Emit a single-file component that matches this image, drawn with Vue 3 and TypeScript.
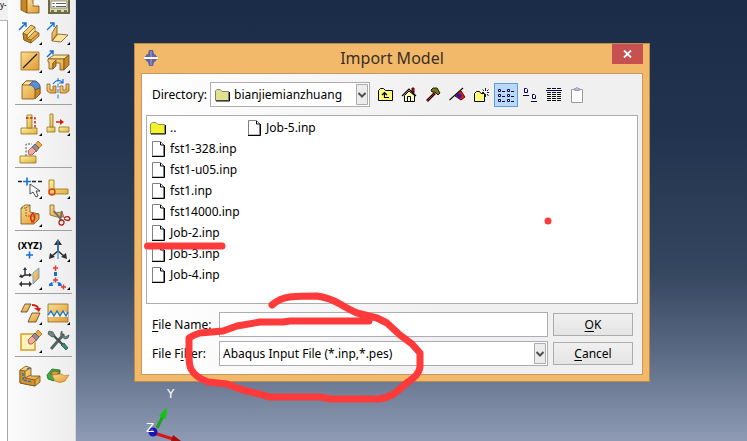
<script setup lang="ts">
import { ref } from 'vue'

interface Shape {
  d: string
  f?: string
  s?: string
  w?: number
  dash?: string
}

interface Tool {
  label: string
  shapes: Shape[]
  menu?: boolean
  text?: string
}

const gold = 'url(#gold)'
const pale = '#fbe39a'
const dark = '#74541a'
const deep = '#c98624'
const straw = 'url(#straw)'
const blue = '#1670d8'
const red = '#d3200e'
const ink = '#303030'

const eraser: Shape[] = [
  { d: 'M19 7L22 3L26 7L22 11z', f: '#eda94a', s: '#a8691d' },
  { d: 'M16 9L19 6L23 10L20 14z', f: '#8e8e96', s: '#4f4f58' },
  { d: 'M12 13L16 9L20 13L16 17H13z', f: '#f2a9a0', s: '#a04f48' },
]

const groups: Tool[][] = [
  [
    {
      label: 'Create solid',
      shapes: [
        { d: 'M5 4V19L11 22V7z', f: deep, s: dark },
        { d: 'M11 4V22H23V15H17V4z', f: gold, s: dark },
        { d: 'M17 14L13 11V4', s: pale },
      ],
    },
    {
      label: 'Part manager',
      shapes: [
        { d: 'M5 5H25V22H5z', f: '#d9d6b4', s: '#6b6946', w: 2 },
        { d: 'M7 10H23V17H7z', f: '#fff', s: '#7d7b58' },
        { d: 'M8.500 12.500H10.500M12 12.500H22M8.500 15.500H10.500M12 15.500H22', s: '#333' },
        { d: 'M7 20H10M13 20H17M20 20H23', s: '#77754f', w: 2 },
      ],
    },
    {
      label: 'Extrude solid',
      menu: true,
      shapes: [
        { d: 'M3 11L10 4M6 4H10V8', s: blue, w: 1.5 },
        { d: 'M7 14L15 6L19 8V12L23 14V17L15 24L8 21z', f: gold, s: dark },
        { d: 'M7 14L11 16V20L15 21V24L8 21z', f: deep, s: dark },
        { d: 'M11 16L19 8M11 20L19 12M15 21L23 14', s: dark },
        { d: 'M12 15.500L18.500 9V12L12 18.500z', f: pale },
      ],
    },
    {
      label: 'Extrude shell',
      menu: true,
      shapes: [
        { d: 'M3 11L10 4M6 4H10V8', s: blue, w: 1.3 },
        { d: 'M8 22V14L13 6V15z', f: gold, s: dark },
        { d: 'M8 22L14 15L24 16L17 23z', f: pale, s: dark },
      ],
    },
    {
      label: 'Partition face',
      menu: true,
      shapes: [
        { d: 'M5 5H23V23H5z', f: gold, s: '#9b6f25' },
        { d: 'M7 21L21 7', s: '#2b2416', w: 1.3 },
      ],
    },
    {
      label: 'Extrude cut',
      menu: true,
      shapes: [
        { d: 'M3 10L9 4M5.500 4H9V7.500', s: blue, w: 1.5 },
        { d: 'M4 12L10 8H25L20 12z', f: pale, s: dark },
        { d: 'M4 12H20V23H16V16H9V22H5V15H4z', f: gold, s: dark },
        { d: 'M20 12L25 8V18L20 23zM9 16L12 13V19L9 22z', f: deep, s: dark },
      ],
    },
    {
      label: 'Round edge',
      menu: true,
      shapes: [
        { d: 'M6 10L10 6H20L24 11V19L18 24H6z', f: gold, s: dark },
        { d: 'M6 10L10 6H17L13 10z', f: pale, s: dark },
        { d: 'M13 10L17 6Q24 6 24 13L19 15Q18 10 13 10z', f: '#5c8ed6', s: '#31589a' },
        { d: 'M19 15V24L24 19V13z', f: deep, s: dark },
      ],
    },
    {
      label: 'Mirror part',
      shapes: [
        { d: 'M3 9H6V15H9V11H12V18H6L3 16z', f: gold, s: '#8f611b' },
        { d: 'M25 9H22V15H19V11H16V18H22L25 16z', f: gold, s: '#8f611b' },
        { d: 'M14 3V25', s: '#4b9be6', w: 1.3, dash: '4 1.500' },
        { d: 'M9 9Q14 2 19 8M19 4V8H15', s: blue, w: 1.2 },
      ],
    },
  ],
  [
    {
      label: 'Edit feature',
      menu: true,
      shapes: [
        { d: 'M5 18H21V24H5z', f: straw, s: '#8f7420' },
        { d: 'M11 5H16V18H11z', f: straw, s: '#8f7420' },
        { d: 'M10 8H19V18', s: red, w: 1.5, dash: '2.500 1.500' },
      ],
    },
    {
      label: 'Move feature',
      menu: true,
      shapes: [
        { d: 'M3 17H11V22H3z', f: straw, s: '#8f7420' },
        { d: 'M6 4H9V17H6z', f: straw, s: '#8f7420' },
        { d: 'M12 12H18', s: red, w: 1.5 },
        { d: 'M16 9L20 12L16 15z', f: red },
        { d: 'M15 17H25V22H15z', f: straw, s: '#8f7420' },
      ],
    },
    {
      label: 'Delete feature',
      shapes: [
        { d: 'M10 18V6H16', s: '#222', dash: '2 1.500' },
        { d: 'M4 18H20V25H4z', f: straw, s: '#8f7420' },
        ...eraser,
      ],
    },
  ],
  [
    {
      label: 'Datum point',
      menu: true,
      shapes: [
        { d: 'M2 8.500H6M16 8.500H20M22 8.500H26', s: '#222', w: 1.3 },
        { d: 'M7 8.500H15M11 4.500V12.500', s: blue, w: 1.6 },
        { d: 'M14 11V21L17 19L20 24L22 23L20 18H24z', f: '#fff', s: '#222' },
      ],
    },
    {
      label: 'Datum edge',
      menu: true,
      shapes: [
        { d: 'M5 7H10V16H24V21H5z', f: straw, s: '#96701d' },
        { d: 'M8 16A3 3 0 1 1 8 22A3 3 0 1 1 8 16', s: '#e23a17', w: 1.4 },
      ],
    },
    {
      label: 'Partition cell',
      menu: true,
      shapes: [
        { d: 'M5 7L9 4H14V11L23 13V18L18 23H5z', f: gold, s: dark },
        { d: 'M5 7H10V15H18V22M10 7L14 4M18 15L23 12', s: dark, dash: '2 1' },
        { d: 'M17 12Q13 15 16 21Q21 18 17 12', s: '#e02717', w: 1.5 },
      ],
    },
    {
      label: 'Trim edges',
      shapes: [
        { d: 'M6 4H10V12L18 11L20 16H13L6 14z', f: gold, s: '#83632a' },
        { d: 'M10 10L18 20M18 10L16 20', s: '#6b6b72', w: 1.7 },
        { d: 'M17 19A2.500 2.500 0 1 0 18 24A2.500 2.500 0 1 0 17 19M20 17Q25 14 26 18Q25 21 20 18', s: '#b41917', w: 1.3 },
      ],
    },
  ],
  [
    {
      label: 'Point from coordinates',
      menu: true,
      text: '(XYZ)',
      shapes: [{ d: 'M10 19H17M13.500 15.500V22.500', s: blue, w: 1.6 }],
    },
    {
      label: 'Coordinate system',
      menu: true,
      shapes: [
        { d: 'M14 6V15L8 20M14 15L20 20', s: ink, w: 1.6 },
        { d: 'M10 9L14 3L18 9zM5 23L6 17L11 21zM23 23L22 17L17 21z', f: ink },
        { d: 'M14 4V23', s: '#2e8ae0', w: 1.2 },
      ],
    },
    {
      label: 'Datum plane',
      menu: true,
      shapes: [
        { d: 'M9 5V11L5 13M9 11H14M4 20H15', s: ink, w: 1.4 },
        { d: 'M7 6L9 3L11 6zM13 9L16 11L13 13zM3 13L5 10L7 14zM6 17L3 20L6 23zM13 17L16 20L13 23z', f: ink },
        { d: 'M17 9L23 4V14L17 20z', f: gold, s: '#4c93d2' },
      ],
    },
    {
      label: 'Datum axis system',
      menu: true,
      shapes: [
        { d: 'M9 4H14M11.500 1.500V7M9 16H14M11.500 13.500V18.500M17 23H22M19.500 20.500V25.500', s: '#e33b2c', w: 1.5 },
        { d: 'M10 8H13V12H10zM5 20L8 18L9 22H5zM14 18L17 19L18 22H14z', f: blue },
        { d: 'M6 21L11 17L17 21', s: blue, dash: '2 1' },
      ],
    },
  ],
  [
    {
      label: 'Copy mesh',
      menu: true,
      shapes: [
        { d: 'M5 13L9 5H15L11 13z', f: gold, s: '#54401c' },
        { d: 'M12 23L16 14H24L20 23z', f: gold, s: '#54401c' },
        { d: 'M16 6Q21 6 22 9', s: red, w: 2 },
        { d: 'M18 9H25L23 13z', f: red },
      ],
    },
    {
      label: 'Virtual topology',
      menu: true,
      shapes: [
        { d: 'M4 5H24V23H4z', f: gold, s: '#8f6a25' },
        { d: 'M4 14L7 12L10 17L13 12L16 17L20 12L24 15V18H4z', f: '#f6f5ec' },
        { d: 'M4 16L7 12L10 17L13 12L16 17L19 12L22 17L24 13', s: '#1877cc', w: 1.4 },
      ],
    },
    {
      label: 'Clear',
      menu: true,
      shapes: [{ d: 'M5 7H19V23H5z', f: '#fff2bb', s: '#d79d27', w: 1.5 }, ...eraser],
    },
    {
      label: 'Repair tools',
      shapes: [
        { d: 'M7 22L20 7', s: '#516765', w: 3 },
        { d: 'M9 8L22 21', s: '#444d4d', w: 2.4 },
        { d: 'M5 4L9 5L11 9L8 10L4 7zM18 4V8L21 10L25 8Q25 12 21 12L17 9Q16 5 18 4z', f: '#758581', s: '#4c5856' },
        { d: 'M17 18L20 16L24 21L22 23z', f: '#2f8d7a', s: '#34504a' },
      ],
    },
  ],
  [
    {
      label: 'Merge parts',
      shapes: [
        { d: 'M4 8L10 4L15 6V14L24 14V20L19 24L4 21z', f: gold, s: dark },
        { d: 'M4 8L9 9V16L19 18V24L4 21z', f: '#d99028', s: dark },
        { d: 'M9 9L15 6M9 16L15 13M19 18L24 14', s: dark },
        { d: 'M7 11V18L16 20M11 7L13 6', s: blue, w: 1.3, dash: '3 1' },
      ],
    },
    {
      label: 'Render options',
      shapes: [
        { d: 'M3 13L8 7L16 8V12L11 13L10 19L4 17z', f: '#47a844', s: '#1d6c27' },
        { d: 'M6 12L10 9L16 10L12 13z', f: '#d3a248', s: '#735a1e' },
        { d: 'M8 13L17 12Q20 15 25 13L21 19Q16 22 11 19z', f: gold, s: '#c38733' },
      ],
    },
  ],
]

interface FileTool {
  label: string
  shapes: Shape[]
  active?: boolean
}

const folderYellow = '#ffff78'
const navy = '#000080'

const fileTools: FileTool[] = [
  {
    label: 'Up one level',
    shapes: [
      { d: 'M1.500 13.500V3.500L3.500 1.500H6.500L8.500 3.500H15.500V13.500z', f: folderYellow, s: '#000' },
      { d: 'M12 10.500H7.500V6M5 8L7.500 5.500L10 8', s: '#000', w: 1.2 },
    ],
  },
  {
    label: 'Home',
    shapes: [
      { d: 'M11 1H13V6H11z', f: '#a31515', s: '#600' },
      { d: 'M3.500 8.500L8 4L13.500 8.500V14.500H3.500z', f: '#ffffb0', s: '#000' },
      { d: 'M1 9L8 2L15 9', s: '#000', w: 1.2 },
      { d: 'M6.500 14V9.500H9.500V14', f: '#fff', s: '#000' },
    ],
  },
  {
    label: 'Work directory',
    shapes: [
      { d: 'M2 14L10 6', s: '#300', w: 2.6 },
      { d: 'M2 14L10 6', s: '#a51c1c', w: 1 },
      { d: 'M6 3L8 1H12L15 6L13 8L10 5L7 5z', f: '#76761b', s: '#222200' },
    ],
  },
  {
    label: 'Bookmark',
    shapes: [
      { d: 'M.5 13L14 1', s: '#111', w: 1.2 },
      { d: 'M9 6L12 4L16 10L12 13L6 9z', f: '#e01818', s: '#700' },
      { d: 'M9 6L13 8L11 12L7 9z', f: '#1b20b0' },
    ],
  },
  {
    label: 'New directory',
    shapes: [
      { d: 'M1.500 14.500V6.500L3.500 4.500H6.500L8 6.500H11.500V14.500z', f: folderYellow, s: '#000' },
      { d: 'M12.500 1V4M12.500 7V10M9 5.500H11M14 5.500H16M9.500 2.500L11 4M14 7L15.500 9M15.500 2.500L14 4', s: '#222' },
    ],
  },
  {
    label: 'List view',
    active: true,
    shapes: [
      { d: 'M1.500 2.500H3.500V4.500H1.500zM10.500 2.500H12.500V4.500H10.500zM1.500 7.500H3.500V9.500H1.500zM10.500 7.500H12.500V9.500H10.500zM1.500 12.500H3.500V14.500H1.500zM10.500 12.500H12.500V14.500H10.500z', f: '#fff', s: navy },
      { d: 'M5 4.500H8M14 4.500H17M5 9.500H8M14 9.500H17M5 14.500H8M14 14.500H17', s: '#111' },
    ],
  },
  {
    label: 'Icon view',
    shapes: [
      { d: 'M3.500 1.500H5.500L6.500 2.500V5.500H3.500zM11.500 7.500H13.500L14.500 8.500V11.500H11.500z', f: '#fff', s: navy },
      { d: 'M2 8.500H8M10 14.500H16', s: '#111' },
    ],
  },
  {
    label: 'Detail view',
    shapes: [
      { d: 'M1 3.500H17', s: navy },
      { d: 'M2 1.500H16M2 5.500H16M2 7.500H16M2 9.500H16M2 11.500H16M2 13.500H16', s: '#111', dash: '4 1' },
    ],
  },
  {
    label: 'Show files',
    shapes: [
      { d: 'M2.500 2.500H13.500V15.500H2.500z', f: '#fff', s: '#9a9a9a' },
      { d: 'M5.500 3.500V1.500H7L7.500 .5H8.500L9 1.500H10.500V3.500z', f: '#b9b9e4', s: '#9a9ac4' },
    ],
  },
]

const files: string[] = [
  '..',
  'fst1-328.inp',
  'fst1-u05.inp',
  'fst1.inp',
  'fst14000.inp',
  'Job-2.inp',
  'Job-3.inp',
  'Job-4.inp',
  'Job-5.inp',
]

const fileName = ref('')
const directory = ref('bianjiemianzhuang')
const filter = ref('Abaqus Input File (*.inp,*.pes)')
</script>

<template>
  <div class="app">
    <svg class="defs" aria-hidden="true">
      <defs>
        <linearGradient id="gold" x1="0" y1="0" x2="1" y2="1">
          <stop offset="0" stop-color="#fbdc8c" />
          <stop offset="1" stop-color="#e09a34" />
        </linearGradient>
        <linearGradient id="straw" x1="0" y1="0" x2="1" y2="1">
          <stop offset="0" stop-color="#fff2a0" />
          <stop offset="1" stop-color="#dfb040" />
        </linearGradient>
      </defs>
    </svg>

    <aside class="tree">
      <div class="tree-head">y-</div>
      <div class="tree-body"></div>
    </aside>

    <nav class="toolbox" aria-label="Part tools">
      <div v-for="(group, g) in groups" :key="g" class="group">
        <button v-for="tool in group" :key="tool.label" class="tool" type="button" :aria-label="tool.label">
          <svg viewBox="0 0 28 28" width="28" height="28">
            <path
              v-for="(p, i) in tool.shapes"
              :key="i"
              :d="p.d"
              :fill="p.f ?? 'none'"
              :stroke="p.s ?? 'none'"
              :stroke-width="p.w ?? 0.8"
              :stroke-dasharray="p.dash"
            />
            <text v-if="tool.text" class="tool-text" x="14" y="13" text-anchor="middle">{{ tool.text }}</text>
            <path v-if="tool.menu" d="M26 23V26H23z" fill="#000" />
          </svg>
        </button>
      </div>
    </nav>

    <main class="viewport">
      <svg class="triad" width="50" height="60" viewBox="0 0 50 60">
        <path d="M13 47L20 33" stroke="#16a516" stroke-width="3" />
        <path d="M15 35L23 26L22 38z" fill="#12c412" />
        <path d="M10 52L32 59" stroke="#d81616" stroke-width="3" />
        <path d="M29 54L37 60H27z" fill="#a80c0c" />
        <circle cx="9" cy="51" r="4.500" fill="#1717b8" />
        <circle cx="8" cy="49.500" r="1.500" fill="#5757e8" />
        <text x="23" y="17">Y</text>
        <text x="2" y="51">Z</text>
      </svg>

      <section class="dialog" role="dialog" aria-labelledby="title">
        <header class="titlebar">
          <svg class="logo" width="16" height="16" viewBox="0 0 16 16">
            <path d="M6 0H10L11 4L13 5V6L15 7V9L13 10V11L11 12L10 16H6L5 12L3 11V10L1 9V7L3 6V5L5 4z" fill="#62629f" />
            <path d="M7 1H9V15H7z" fill="#8585b8" />
            <path d="M1 7H15V9H1z" fill="#fff" />
          </svg>
          <h1 id="title">Import Model</h1>
          <button class="close" type="button" aria-label="Close">
            <svg width="9" height="8" viewBox="0 0 9 8">
              <path d="M1 .5L8 7.500M8 .5L1 7.500" stroke="#fff" stroke-width="1.800" />
            </svg>
          </button>
        </header>

        <div class="body">
          <div class="location">
            <label for="directory">Directory:</label>
            <div class="combo directory">
              <select id="directory" v-model="directory">
                <option>bianjiemianzhuang</option>
              </select>
              <svg class="folder" width="16" height="14" viewBox="0 0 16 14">
                <path d="M1.500 12.500V3L3 1.500H6L8 3.500H14.500V12.500z" fill="#e2e28c" stroke="#808080" />
                <path d="M2 13H15.500V4" fill="none" stroke="#000" />
              </svg>
              <svg class="arrow" width="12" height="21" viewBox="0 0 12 21">
                <path d="M.5 .5H11.500V20.500H.5z" fill="#ececec" stroke="#acacac" />
                <path d="M2.500 9L6 12.500L9.500 9" fill="none" stroke="#505050" stroke-width="2" />
              </svg>
            </div>
            <div class="file-tools">
              <button
                v-for="tool in fileTools"
                :key="tool.label"
                class="file-tool"
                :class="{ active: tool.active }"
                type="button"
                :aria-label="tool.label"
              >
                <svg width="18" height="16" viewBox="0 0 18 16">
                  <path
                    v-for="(p, i) in tool.shapes"
                    :key="i"
                    :d="p.d"
                    :fill="p.f ?? 'none'"
                    :stroke="p.s ?? 'none'"
                    :stroke-width="p.w ?? 1"
                    :stroke-dasharray="p.dash"
                  />
                </svg>
              </button>
            </div>
          </div>

          <ul class="files">
            <li v-for="file in files" :key="file">
              <svg v-if="file === '..'" width="16" height="14" viewBox="0 0 16 14">
                <path d="M.5 12.500V3L2.500 1.500H6L8 3.500H14.500V12.500z" fill="#f2f22a" stroke="#909060" />
                <path d="M1 13H15.500V4" fill="none" stroke="#000" />
              </svg>
              <svg v-else width="16" height="16" viewBox="0 0 16 16">
                <path d="M2.500 15V.5H10.500L13.500 3.500V15z" fill="#fff" stroke="#808080" />
                <path d="M2 15.500H14.500V4M10.500 1V4H14" fill="none" stroke="#000" />
              </svg>
              <span>{{ file }}</span>
            </li>
          </ul>

          <form class="fields" @submit.prevent>
            <label for="filename"><u>F</u>ile Name:</label>
            <input id="filename" v-model="fileName" type="text" />
            <button class="action" type="submit"><span><u>O</u>K</span></button>
            <label for="filter">File F<u>i</u>lter:</label>
            <div class="combo">
              <select id="filter" v-model="filter">
                <option>Abaqus Input File (*.inp,*.pes)</option>
              </select>
              <svg class="arrow" width="12" height="21" viewBox="0 0 12 21">
                <path d="M.5 .5H11.500V20.500H.5z" fill="#ececec" stroke="#acacac" />
                <path d="M2.500 9L6 12.500L9.500 9" fill="none" stroke="#505050" stroke-width="2" />
              </svg>
            </div>
            <button class="action" type="button"><span><u>C</u>ancel</span></button>
          </form>
        </div>

        <svg class="marks" width="430" height="370" viewBox="134 43 430 370" aria-hidden="true">
          <path d="M147.500 246H222" />
          <path
            d="M272 305Q280 298 290 297T317 296Q330 298 340 304T357 313L377 318L387 323L400 335L412 344L420 353V367Q419 375 408 382L395 393Q386 399 377 399H331L320 397H270L240 389L227 384L208 382Q195 377 191 369Q189 365 189 355V338Q193 335 200 333L223 331L237 326L260 322H283L290 321H369"
          />
          <circle cx="548" cy="221" r="3.500" />
        </svg>
      </section>
    </main>
  </div>
</template>

<style>
html,
body,
#app {
  height: 100%;
}
body {
  margin: 0;
  overflow: hidden;
}
</style>

<style scoped>
.app {
  display: flex;
  height: 100%;
  overflow: hidden;
  font: 12px/16px "Noto Sans", "Open Sans", sans-serif;
  color: #000;
}
.defs {
  position: absolute;
  width: 0;
  height: 0;
}
button {
  font: inherit;
  color: inherit;
  padding: 0;
}
.tree {
  display: flex;
  flex: none;
  flex-direction: column;
  width: 8px;
  background: #f0f0f0;
}
.tree-head {
  height: 20px;
  line-height: 10px;
  font-size: 8px;
  border-bottom: 1px solid #b4b4b4;
}
.tree-body {
  flex: 1;
  background: #fff;
  border-right: 1px solid #a8a8a8;
}
.toolbox {
  flex: none;
  box-sizing: border-box;
  width: 68px;
  margin-top: -9px;
  padding: 0 3px 0 7px;
  background: linear-gradient(90deg, #fbfbfb, #ededed);
  border-right: 1px solid #d8d8d8;
}
.group {
  display: grid;
  grid-template-columns: 28px 28px;
  padding: 0 1px 1px;
}
.group + .group {
  padding-top: 5px;
  border-top: 1px solid #a0a0a0;
}
.tool {
  width: 28px;
  height: 28px;
  background: none;
  border: 0;
}
.tool svg {
  display: block;
}
.tool-text {
  font: bold 8px "DejaVu Sans", sans-serif;
}
.viewport {
  position: relative;
  flex: 1;
  background: linear-gradient(#1b2c48 0, #22334f 30%, #35465f 62%, #5b6a84 80%, #8f9bb4 100%);
}
.triad {
  position: absolute;
  bottom: 0;
  left: 68px;
}
.triad text {
  fill: #fff;
  font: 12px "DejaVu Sans", sans-serif;
}
.dialog {
  position: absolute;
  top: 43px;
  left: 58px;
  right: 97px;
  box-sizing: border-box;
  padding: 0 6px 6px;
  background: #f2b96b;
  border: 1px solid #b98b4c;
}
.titlebar {
  display: grid;
  grid-template-columns: 31px 1fr 31px;
  height: 29px;
}
.logo {
  margin: 6px 0 0 2px;
}
h1 {
  margin: 0;
  font-size: 16px;
  font-weight: 400;
  line-height: 28px;
  text-align: center;
  color: #3a2f22;
}
.close {
  display: grid;
  place-items: center;
  height: 20px;
  background: #c75050;
  border: 0;
}
.body {
  padding: 8px 4px;
  background: linear-gradient(90deg, #fff, #f0f0f0 60%);
  border: 1px solid #c69a5f;
}
.location {
  display: flex;
  align-items: center;
  padding-left: 6px;
}
.location label {
  width: 58px;
  white-space: nowrap;
}
.combo {
  display: grid;
  grid-template-columns: 1fr 14px;
  align-items: center;
}
.combo select,
.fields input {
  box-sizing: border-box;
  width: 100%;
  height: 25px;
  padding: 0 3px;
  font: inherit;
  color: #000;
  background: #fff;
  border: 1px solid #abadb3;
  border-radius: 0;
  appearance: none;
}
.combo select {
  grid-area: 1 / 1 / 2 / 3;
}
.arrow {
  grid-area: 1 / 2;
  pointer-events: none;
}
.directory {
  width: 160px;
}
.directory select {
  padding-left: 23px;
}
.folder {
  grid-area: 1 / 1;
  margin-left: 4px;
  pointer-events: none;
}
.file-tools {
  display: flex;
  margin-left: 4px;
}
.file-tool {
  display: grid;
  place-items: center;
  width: 24px;
  height: 24px;
  background: none;
  border: 1px solid transparent;
}
.file-tool.active {
  background: #b9d9f6;
  border-color: #5a9fe0;
}
.files {
  display: grid;
  grid-template-rows: repeat(8, 21px);
  grid-auto-columns: 96px;
  grid-auto-flow: column;
  margin: 8px 0;
  padding: 1px 3px 18px;
  list-style: none;
  background: #fff;
  border: 1px solid #abadb3;
}
.files li {
  display: flex;
  align-items: center;
  gap: 4px;
  white-space: nowrap;
}
.fields {
  display: grid;
  grid-template-columns: 62px 1fr 80px;
  gap: 4px 5px;
  align-items: center;
  padding: 0 5px 0 6px;
}
.fields label {
  white-space: nowrap;
}
.action {
  height: 23px;
  background: linear-gradient(#f0f0f0, #e4e4e4);
  border: 1px solid #acacac;
}
u {
  text-underline-offset: 2px;
}
.marks {
  position: absolute;
  top: -1px;
  left: -1px;
  pointer-events: none;
  fill: none;
  stroke: #ff3a3a;
  stroke-width: 7;
  stroke-linecap: round;
  stroke-linejoin: round;
}
.marks circle {
  fill: #ff3a3a;
  stroke: none;
}
</style>
